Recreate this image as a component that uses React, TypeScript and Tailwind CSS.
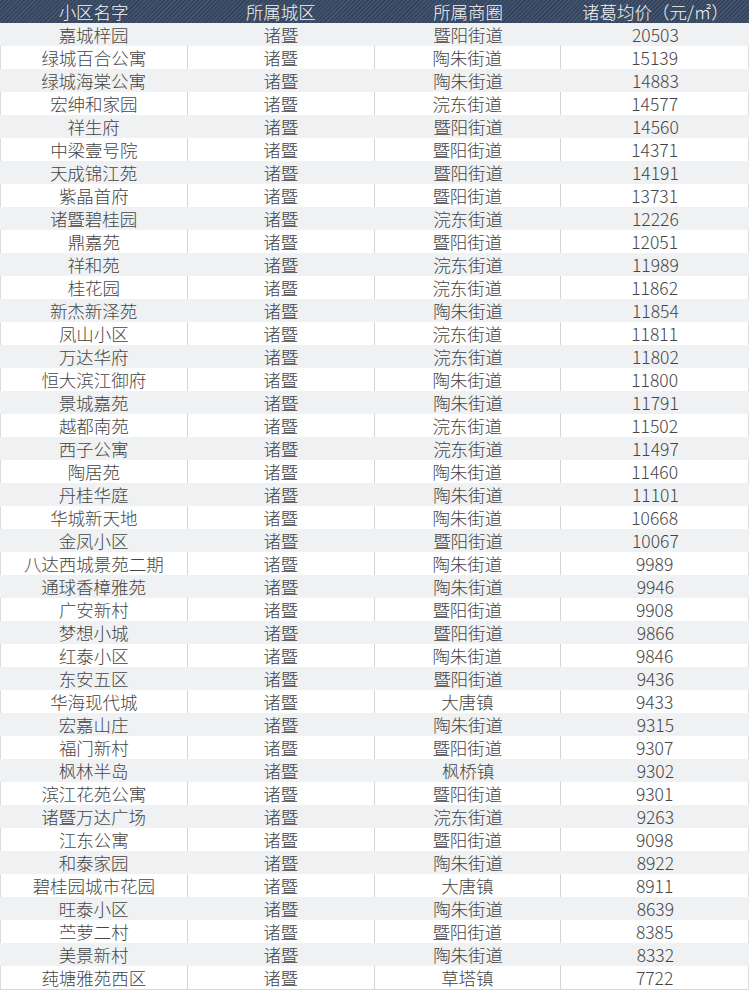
const rows: [string, string, number][] = [
  ['嘉城梓园', '暨阳街道', 20503],
  ['绿城百合公寓', '陶朱街道', 15139],
  ['绿城海棠公寓', '陶朱街道', 14883],
  ['宏绅和家园', '浣东街道', 14577],
  ['祥生府', '暨阳街道', 14560],
  ['中梁壹号院', '暨阳街道', 14371],
  ['天成锦江苑', '暨阳街道', 14191],
  ['紫晶首府', '暨阳街道', 13731],
  ['诸暨碧桂园', '浣东街道', 12226],
  ['鼎嘉苑', '暨阳街道', 12051],
  ['祥和苑', '浣东街道', 11989],
  ['桂花园', '浣东街道', 11862],
  ['新杰新泽苑', '陶朱街道', 11854],
  ['凤山小区', '浣东街道', 11811],
  ['万达华府', '浣东街道', 11802],
  ['恒大滨江御府', '陶朱街道', 11800],
  ['景城嘉苑', '陶朱街道', 11791],
  ['越都南苑', '浣东街道', 11502],
  ['西子公寓', '浣东街道', 11497],
  ['陶居苑', '陶朱街道', 11460],
  ['丹桂华庭', '陶朱街道', 11101],
  ['华城新天地', '陶朱街道', 10668],
  ['金凤小区', '暨阳街道', 10067],
  ['八达西城景苑二期', '陶朱街道', 9989],
  ['通球香樟雅苑', '陶朱街道', 9946],
  ['广安新村', '暨阳街道', 9908],
  ['梦想小城', '暨阳街道', 9866],
  ['红泰小区', '陶朱街道', 9846],
  ['东安五区', '暨阳街道', 9436],
  ['华海现代城', '大唐镇', 9433],
  ['宏嘉山庄', '陶朱街道', 9315],
  ['福门新村', '暨阳街道', 9307],
  ['枫林半岛', '枫桥镇', 9302],
  ['滨江花苑公寓', '暨阳街道', 9301],
  ['诸暨万达广场', '浣东街道', 9263],
  ['江东公寓', '暨阳街道', 9098],
  ['和泰家园', '陶朱街道', 8922],
  ['碧桂园城市花园', '大唐镇', 8911],
  ['旺泰小区', '陶朱街道', 8639],
  ['苎萝二村', '暨阳街道', 8385],
  ['美景新村', '陶朱街道', 8332],
  ['莼塘雅苑西区', '草塔镇', 7722],
]

const headers = ['小区名字', '所属城区', '所属商圈', '诸葛均价（元/㎡）']

export default function App() {
  return (
    <div className="w-[749px] bg-white font-['Noto_Sans_CJK_SC',sans-serif] font-light text-[17.5px] leading-none">
      <div className="grid grid-cols-4 h-[23px] bg-[repeating-linear-gradient(135deg,#41536e_0px,#41536e_1.5px,#34445b_1.5px,#34445b_3px)] text-[#f4f6f8]">
        {headers.map((h) => (
          <div key={h} className="flex items-center justify-center">{h}</div>
        ))}
      </div>
      <div className="border-b border-[#d6d8dc]">
        {rows.map(([name, area, price], i) => {
          const odd = i % 2 === 0
          return (
            <div
              key={name}
              className={
                odd
                  ? 'grid grid-cols-4 h-[23px] bg-[#eff1f3] text-[#454545]'
                  : 'grid grid-cols-4 h-[23px] bg-white text-[#454545] border-l border-r border-[#dcdcdc]'
              }
            >
              <div className={odd ? 'flex items-center justify-center' : 'flex items-center justify-center border-r border-[#d4d4d4]'}>{name}</div>
              <div className={odd ? 'flex items-center justify-center' : 'flex items-center justify-center border-r border-[#d4d4d4]'}>诸暨</div>
              <div className={odd ? 'flex items-center justify-center' : 'flex items-center justify-center border-r border-[#d4d4d4]'}>{area}</div>
              <div className="flex items-center justify-center text-[17.5px]">{price}</div>
            </div>
          )
        })}
      </div>
    </div>
  )
}
